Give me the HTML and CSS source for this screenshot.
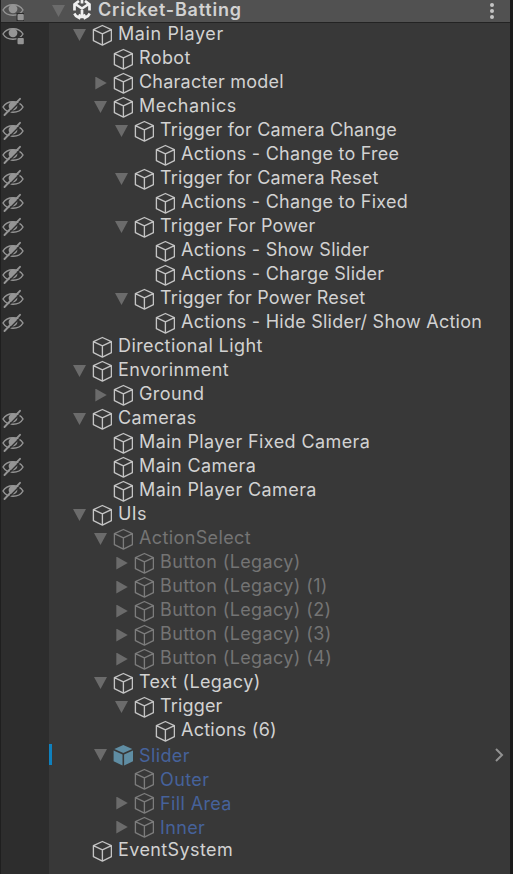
FILE: index.html
```
<!DOCTYPE html>
<html lang="en">
<head>
    <meta charset="UTF-8">
    <meta name="viewport" content="width=device-width, initial-scale=1.0">
    <title>Hierarchy</title>
    <link rel="stylesheet" href="styles.css">
</head>
<body>
    <svg class="symbols">
        <symbol id="cube" viewBox="-.4 -.3 20 22">
            <path d="M10 1.2 19 5.3V16.4L10 20.8 1 16.4V5.3ZM1 5.3 10 9.6 19 5.3M10 9.6V20.8" fill="none" stroke="currentColor" stroke-width="1.35" stroke-linejoin="round"/>
        </symbol>
        <symbol id="prefab" viewBox="-.3 -.3 20 22">
            <path d="M10 .6 19 4.7 10 8.7 1 4.7ZM.3 6.3 9.2 10.2V21.2L.3 17ZM19.7 6.3 10.8 10.2V21.2L19.7 17Z" fill="currentColor"/>
        </symbol>
        <symbol id="eye" viewBox="0 0 24 24">
            <path d="M3 11C7 4 19 4 23 11 19 18 7 18 3 11Z" fill="none" stroke="currentColor" stroke-width="1.4"/>
            <circle cx="13" cy="9.8" r="4.4" fill="currentColor"/>
            <rect class="eye-gap" x="16.5" y="14" width="8" height="8"/>
            <rect x="17.5" y="15" width="6.3" height="6.2" rx="1" fill="currentColor"/>
        </symbol>
        <symbol id="hidden" viewBox="0 0 24 24">
            <path d="M3 12C7 5 19 5 23 12 19 19 7 19 3 12Z" fill="none" stroke="currentColor" stroke-width="1.5"/>
            <circle cx="13" cy="11" r="4.4" fill="currentColor"/>
            <path d="M6 21 21.5 5.5" stroke="#2d2d2d" stroke-width="1.4"/>
            <path d="M4.5 20 20 3.8" stroke="currentColor" stroke-width="1.9" stroke-linecap="round"/>
        </symbol>
    </svg>

    <div class="hierarchy">
        <div class="row scene">
            <svg class="vis"><use href="#eye"/></svg>
            <i class="arrow down"></i>
            <svg class="unity" viewBox="0 0 20 22">
                <path d="M7 2 2.500 5.500V11.500M13 2 17.500 5.500V11.500M2.300 14.500 4 17 8.500 19.500M17.700 14.500 16 17 11.500 19.500M10 1V4.500M4 5.500 10 9.500 16 5.500M10 9V17M6.500 16 10 18 13.500 16" fill="none" stroke="currentColor" stroke-width="2.700"/>
            </svg>
            <span>Cricket-Batting</span>
            <svg class="menu" viewBox="0 0 4 16"><circle cx="2" cy="2" r="2"/><circle cx="2" cy="8" r="2"/><circle cx="2" cy="14" r="2"/></svg>
        </div>
        <div class="row d1 wide"><svg class="vis"><use href="#eye"/></svg><i class="arrow down"></i><svg class="cube"><use href="#cube"/></svg><span>Main Player</span></div>
        <div class="row d2"><i class="vis"></i><i class="arrow"></i><svg class="cube"><use href="#cube"/></svg><span>Robot</span></div>
        <div class="row d2 tight"><i class="vis"></i><i class="arrow right"></i><svg class="cube"><use href="#cube"/></svg><span>Character model</span></div>
        <div class="row d2 wide"><svg class="vis"><use href="#hidden"/></svg><i class="arrow down"></i><svg class="cube"><use href="#cube"/></svg><span>Mechanics</span></div>
        <div class="row d3"><svg class="vis"><use href="#hidden"/></svg><i class="arrow down"></i><svg class="cube"><use href="#cube"/></svg><span>Trigger for Camera Change</span></div>
        <div class="row d4"><svg class="vis"><use href="#hidden"/></svg><i class="arrow"></i><svg class="cube"><use href="#cube"/></svg><span>Actions - Change to Free</span></div>
        <div class="row d3"><svg class="vis"><use href="#hidden"/></svg><i class="arrow down"></i><svg class="cube"><use href="#cube"/></svg><span>Trigger for Camera Reset</span></div>
        <div class="row d4"><svg class="vis"><use href="#hidden"/></svg><i class="arrow"></i><svg class="cube"><use href="#cube"/></svg><span>Actions - Change to Fixed</span></div>
        <div class="row d3"><svg class="vis"><use href="#hidden"/></svg><i class="arrow down"></i><svg class="cube"><use href="#cube"/></svg><span>Trigger For Power</span></div>
        <div class="row d4"><svg class="vis"><use href="#hidden"/></svg><i class="arrow"></i><svg class="cube"><use href="#cube"/></svg><span>Actions - Show Slider</span></div>
        <div class="row d4"><svg class="vis"><use href="#hidden"/></svg><i class="arrow"></i><svg class="cube"><use href="#cube"/></svg><span>Actions - Charge Slider</span></div>
        <div class="row d3"><svg class="vis"><use href="#hidden"/></svg><i class="arrow down"></i><svg class="cube"><use href="#cube"/></svg><span>Trigger for Power Reset</span></div>
        <div class="row d4"><svg class="vis"><use href="#hidden"/></svg><i class="arrow"></i><svg class="cube"><use href="#cube"/></svg><span>Actions - Hide Slider/ Show Action</span></div>
        <div class="row d1"><i class="vis"></i><i class="arrow"></i><svg class="cube"><use href="#cube"/></svg><span>Directional Light</span></div>
        <div class="row d1"><i class="vis"></i><i class="arrow down"></i><svg class="cube"><use href="#cube"/></svg><span>Envorinment</span></div>
        <div class="row d2"><i class="vis"></i><i class="arrow right"></i><svg class="cube"><use href="#cube"/></svg><span>Ground</span></div>
        <div class="row d1"><svg class="vis"><use href="#hidden"/></svg><i class="arrow down"></i><svg class="cube"><use href="#cube"/></svg><span>Cameras</span></div>
        <div class="row d2"><svg class="vis"><use href="#hidden"/></svg><i class="arrow"></i><svg class="cube"><use href="#cube"/></svg><span>Main Player Fixed Camera</span></div>
        <div class="row d2"><svg class="vis"><use href="#hidden"/></svg><i class="arrow"></i><svg class="cube"><use href="#cube"/></svg><span>Main Camera</span></div>
        <div class="row d2"><svg class="vis"><use href="#hidden"/></svg><i class="arrow"></i><svg class="cube"><use href="#cube"/></svg><span>Main Player Camera</span></div>
        <div class="row d1"><i class="vis"></i><i class="arrow down"></i><svg class="cube"><use href="#cube"/></svg><span>UIs</span></div>
        <div class="row d2 inactive"><i class="vis"></i><i class="arrow down"></i><svg class="cube"><use href="#cube"/></svg><span>ActionSelect</span></div>
        <div class="row d3 inactive"><i class="vis"></i><i class="arrow right"></i><svg class="cube"><use href="#cube"/></svg><span>Button (Legacy)</span></div>
        <div class="row d3 inactive"><i class="vis"></i><i class="arrow right"></i><svg class="cube"><use href="#cube"/></svg><span>Button (Legacy) (1)</span></div>
        <div class="row d3 inactive"><i class="vis"></i><i class="arrow right"></i><svg class="cube"><use href="#cube"/></svg><span>Button (Legacy) (2)</span></div>
        <div class="row d3 inactive"><i class="vis"></i><i class="arrow right"></i><svg class="cube"><use href="#cube"/></svg><span>Button (Legacy) (3)</span></div>
        <div class="row d3 inactive"><i class="vis"></i><i class="arrow right"></i><svg class="cube"><use href="#cube"/></svg><span>Button (Legacy) (4)</span></div>
        <div class="row d2"><i class="vis"></i><i class="arrow down"></i><svg class="cube"><use href="#cube"/></svg><span>Text (Legacy)</span></div>
        <div class="row d3"><i class="vis"></i><i class="arrow down"></i><svg class="cube"><use href="#cube"/></svg><span>Trigger</span></div>
        <div class="row d4"><i class="vis"></i><i class="arrow"></i><svg class="cube"><use href="#cube"/></svg><span>Actions (6)</span></div>
        <div class="row d2 inactive linked changed"><i class="vis"></i><i class="arrow down"></i><svg class="cube prefab"><use href="#prefab"/></svg><span>Slider</span><svg class="open" viewBox="0 0 9 14"><path d="M1 1 7 7 1 13"/></svg></div>
        <div class="row d3 inactive linked"><i class="vis"></i><i class="arrow"></i><svg class="cube"><use href="#cube"/></svg><span>Outer</span></div>
        <div class="row d3 inactive linked"><i class="vis"></i><i class="arrow right"></i><svg class="cube"><use href="#cube"/></svg><span>Fill Area</span></div>
        <div class="row d3 inactive linked"><i class="vis"></i><i class="arrow right"></i><svg class="cube"><use href="#cube"/></svg><span>Inner</span></div>
        <div class="row d1"><i class="vis"></i><i class="arrow"></i><svg class="cube"><use href="#cube"/></svg><span>EventSystem</span></div>
    </div>
</body>
</html>
```
FILE: styles.css
```
* {
    box-sizing: border-box;
}
body {
    margin: 0;
    background: #383838;
    font-family: Inter, "Liberation Sans", sans-serif;
    font-size: 18px;
    letter-spacing: 0.4px;
    color: #d2d2d2;
}
.symbols {
    display: none;
}
.hierarchy {
    height: 874px;
    border-left: 1px solid #1f1f1f;
    border-right: 3px solid #1a1a1a;
    background: linear-gradient(to right, #2d2d2d 48px, #383838 48px);
    overflow: hidden;
}
.row {
    display: flex;
    align-items: center;
    height: 24px;
    line-height: 24px;
    white-space: nowrap;
    position: relative;
}
.row span {
    margin-top: -2px;
}
.scene {
    height: 23px;
    background: #515151;
    border-bottom: 1px solid #232323;
    font-weight: 600;
    letter-spacing: 0.78px;
}
.vis {
    flex: none;
    width: 24px;
    height: 24px;
    margin-left: -1px;
    color: #959595;
}
.eye-gap {
    fill: #2d2d2d;
}
.scene .eye-gap {
    fill: #515151;
}
.arrow {
    flex: none;
    width: 13px;
    height: 12px;
    margin-left: 28px;
}
.down {
    background: #6b6b6b;
    clip-path: polygon(0 0, 100% 0, 50% 100%);
}
.right {
    height: 13px;
    background: #6b6b6b;
    clip-path: polygon(10% 0, 98% 50%, 10% 100%);
}
.d1 .arrow { margin-left: 49px; }
.d2 .arrow { margin-left: 70px; }
.d3 .arrow { margin-left: 91px; }
.d4 .arrow { margin-left: 112px; }
.d3 { letter-spacing: 0.17px; }
.d4 { letter-spacing: 0.24px; }
.tight { letter-spacing: 0.22px; }
.wide { letter-spacing: 0.6px; }
.cube {
    flex: none;
    width: 20px;
    height: 22px;
    margin: 0 6px;
    color: #c4c4c4;
}
.unity {
    flex: none;
    width: 20px;
    height: 22px;
    margin: -3px 6px 0 7px;
    color: #f0f0f0;
}
.menu {
    width: 4px;
    height: 16px;
    margin-left: auto;
    margin-right: 16px;
    fill: #c4c4c4;
}
.inactive {
    letter-spacing: 0.38px;
    color: #747474;
}
.inactive .cube {
    color: #7c7c7c;
}
.linked {
    color: #46629b;
}
.linked span {
    margin-top: 2px;
}
.inactive .prefab {
    color: #5f8da3;
}
/* override marker beside a modified prefab */
.changed::before {
    content: "";
    position: absolute;
    left: 48px;
    top: 1px;
    width: 3px;
    height: 21px;
    background: #0f81be;
}
.open {
    width: 9px;
    height: 14px;
    margin-left: auto;
    margin-right: 6px;
    fill: none;
    stroke: #929292;
    stroke-width: 2;
}
```
